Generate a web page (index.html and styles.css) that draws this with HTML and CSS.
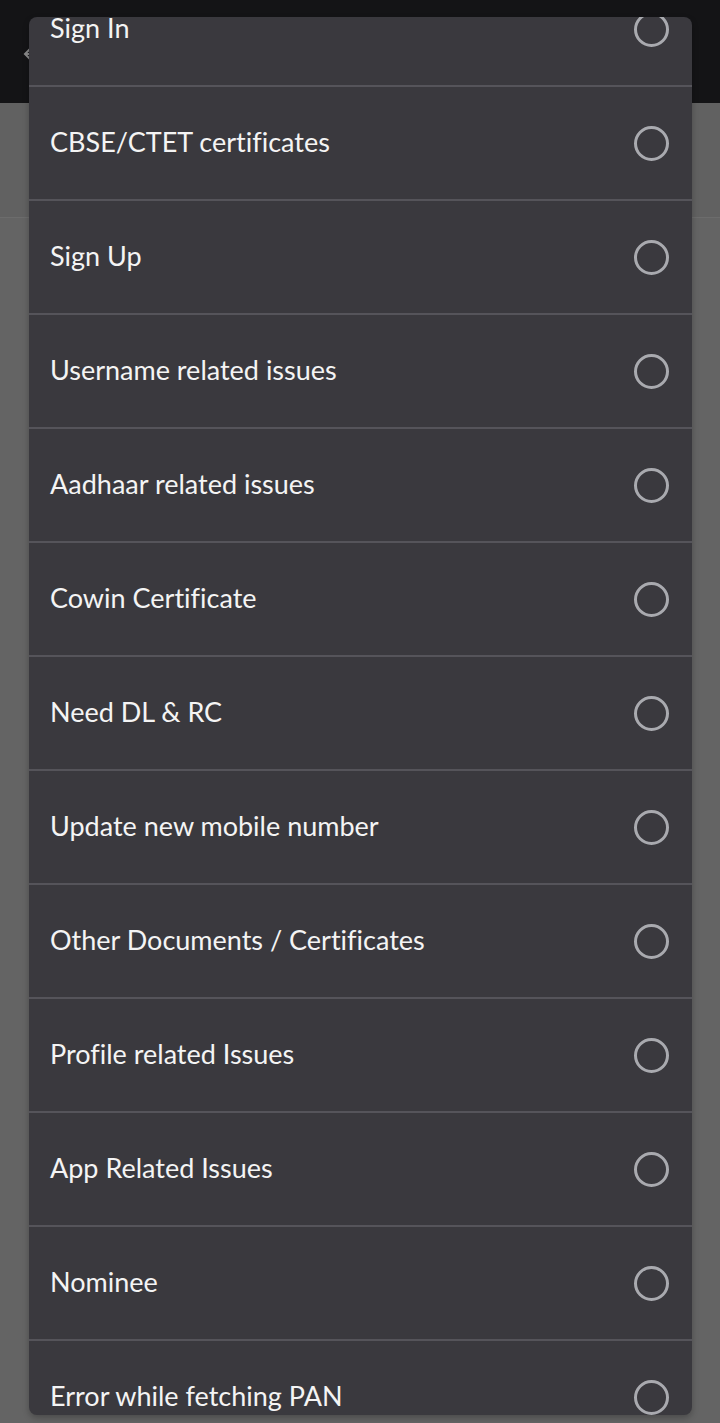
FILE: index.html
```html
<!DOCTYPE html>
<html lang="en">
<head>
<meta charset="utf-8">
<title>Select category</title>
<link rel="stylesheet" href="styles.css">
</head>
<body>
<header class="appbar">
  <svg class="back" width="24" height="24" viewBox="0 0 24 24"><path d="M20 12H5M11 6l-6 6 6 6" fill="none" stroke="#8a8a8a" stroke-width="2"/></svg>
</header>
<div class="subbar"></div>
<main class="page"></main>

<div class="dialog">
  <ul class="list">
    <li class="row"><span class="label">Sign In</span><span class="radio"></span></li>
    <li class="row"><span class="label">CBSE/CTET certificates</span><span class="radio"></span></li>
    <li class="row"><span class="label">Sign Up</span><span class="radio"></span></li>
    <li class="row"><span class="label">Username related issues</span><span class="radio"></span></li>
    <li class="row"><span class="label">Aadhaar related issues</span><span class="radio"></span></li>
    <li class="row"><span class="label">Cowin Certificate</span><span class="radio"></span></li>
    <li class="row"><span class="label">Need DL &amp; RC</span><span class="radio"></span></li>
    <li class="row"><span class="label">Update new mobile number</span><span class="radio"></span></li>
    <li class="row"><span class="label">Other Documents / Certificates</span><span class="radio"></span></li>
    <li class="row"><span class="label">Profile related Issues</span><span class="radio"></span></li>
    <li class="row"><span class="label">App Related Issues</span><span class="radio"></span></li>
    <li class="row"><span class="label">Nominee</span><span class="radio"></span></li>
    <li class="row"><span class="label">Error while fetching PAN</span><span class="radio"></span></li>
  </ul>
</div>
</body>
</html>
```

FILE: styles.css
```css
* { box-sizing: border-box; }
html, body { margin: 0; padding: 0; }
body {
  width: 720px;
  height: 1423px;
  overflow: hidden;
  background: #646464;
  font-family: Lato, "Open Sans", sans-serif;
  position: relative;
}
.appbar {
  height: 103px;
  background: #141416;
  position: relative;
}
.back {
  position: absolute;
  left: 20px;
  top: 42px;
}
.subbar {
  height: 115px;
  background: #616161;
  border-bottom: 1px solid #6c6c6c;
}
.dialog {
  position: absolute;
  left: 29px;
  top: 17px;
  width: 663px;
  height: 1398px;
  background: #3a393e;
  border-radius: 8px;
  overflow: hidden;
  box-shadow: 0 3px 6px rgba(0,0,0,0.25);
}
.list {
  list-style: none;
  margin: -44px 0 0 0;
  padding: 0;
}
.row {
  height: 114px;
  border-bottom: 2px solid #55545a;
  display: flex;
  align-items: center;
  justify-content: space-between;
  padding: 0 23px 0 21px;
}
.label {
  color: #f4f4f4;
  font-size: 27px;
  font-variant-ligatures: none;
  padding-bottom: 3px;
}
.radio {
  width: 35px;
  height: 35px;
  border: 3px solid #a9aaaf;
  border-radius: 50%;
  flex: none;
}
```
